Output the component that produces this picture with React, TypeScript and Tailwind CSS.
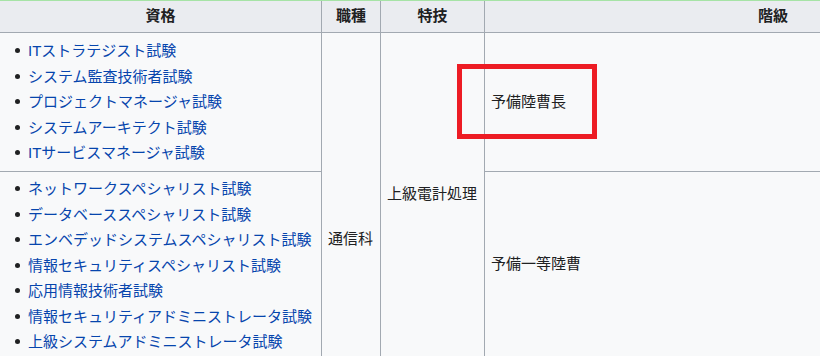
import React from "react";

const FONT = "font-['Liberation_Sans','Noto_Sans_CJK_JP',sans-serif]";

const upperExams = [
  "ITストラテジスト試験",
  "システム監査技術者試験",
  "プロジェクトマネージャ試験",
  "システムアーキテクト試験",
  "ITサービスマネージャ試験",
];

const specialistExams = [
  "ネットワークスペシャリスト試験",
  "データベーススペシャリスト試験",
  "エンベデッドシステムスペシャリスト試験",
  "情報セキュリティスペシャリスト試験",
  "応用情報技術者試験",
  "情報セキュリティアドミニストレータ試験",
  "上級システムアドミニストレータ試験",
];

const ExamList = ({ items }: { items: string[] }) => (
  <ul className="flex flex-col">
    {items.map((item) => (
      <li key={item} className="flex items-center gap-[8px] pl-[15px] h-[25.5px] leading-[25.5px]">
        <span className="w-[5px] h-[5px] rounded-full bg-[#202122] shrink-0" />
        <a href="#" className="text-[#0645ad] whitespace-nowrap">
          {item}
        </a>
      </li>
    ))}
  </ul>
);

const HeaderCell = ({ children }: { children: React.ReactNode }) => (
  <div className="bg-[#eaecf0] flex items-center justify-center font-bold whitespace-nowrap">
    {children}
  </div>
);

export default function App() {
  return (
    <div className={`w-[820px] h-[356px] overflow-hidden relative bg-white border-t border-[#a6e3a6] text-[15px] text-[#202122] ${FONT}`}>
      <div className="grid grid-cols-[321px_58px_103px_576px] grid-rows-[31px_138px_184px_88px] gap-px bg-[#a2a9b1] w-max">
        {/* header */}
        <HeaderCell>資格</HeaderCell>
        <HeaderCell>職種</HeaderCell>
        <HeaderCell>特技</HeaderCell>
        <HeaderCell>階級</HeaderCell>

        {/* qualification groups */}
        <div className="col-start-1 row-start-2 bg-[#f8f9fa] pt-[5px]">
          <ExamList items={upperExams} />
        </div>
        <div className="col-start-1 row-start-3 bg-[#f8f9fa] pt-[4px]">
          <ExamList items={specialistExams} />
        </div>
        <div className="col-start-1 row-start-4 bg-[#f8f9fa]" />

        {/* occupation spans the following rows too */}
        <div className="col-start-2 row-start-2 row-span-3 bg-[#f8f9fa] flex items-center pl-[6px] whitespace-nowrap">
          通信科
        </div>

        {/* specialty */}
        <div className="col-start-3 row-start-2 row-span-2 bg-[#f8f9fa] flex items-center pl-[6px] whitespace-nowrap">
          上級電計処理
        </div>
        <div className="col-start-3 row-start-4 bg-[#f8f9fa]" />

        {/* rank */}
        <div className="col-start-4 row-start-2 bg-[#f8f9fa] flex items-center pl-[6px]">
          予備陸曹長
        </div>
        <div className="col-start-4 row-start-3 bg-[#f8f9fa] flex items-center pl-[6px]">
          予備一等陸曹
        </div>
        <div className="col-start-4 row-start-4 bg-[#f8f9fa]" />
      </div>

      {/* highlight box */}
      <div className="absolute left-[457px] top-[63px] w-[140px] h-[75px] border-[5px] border-[#ed1c24]" />
    </div>
  );
}
